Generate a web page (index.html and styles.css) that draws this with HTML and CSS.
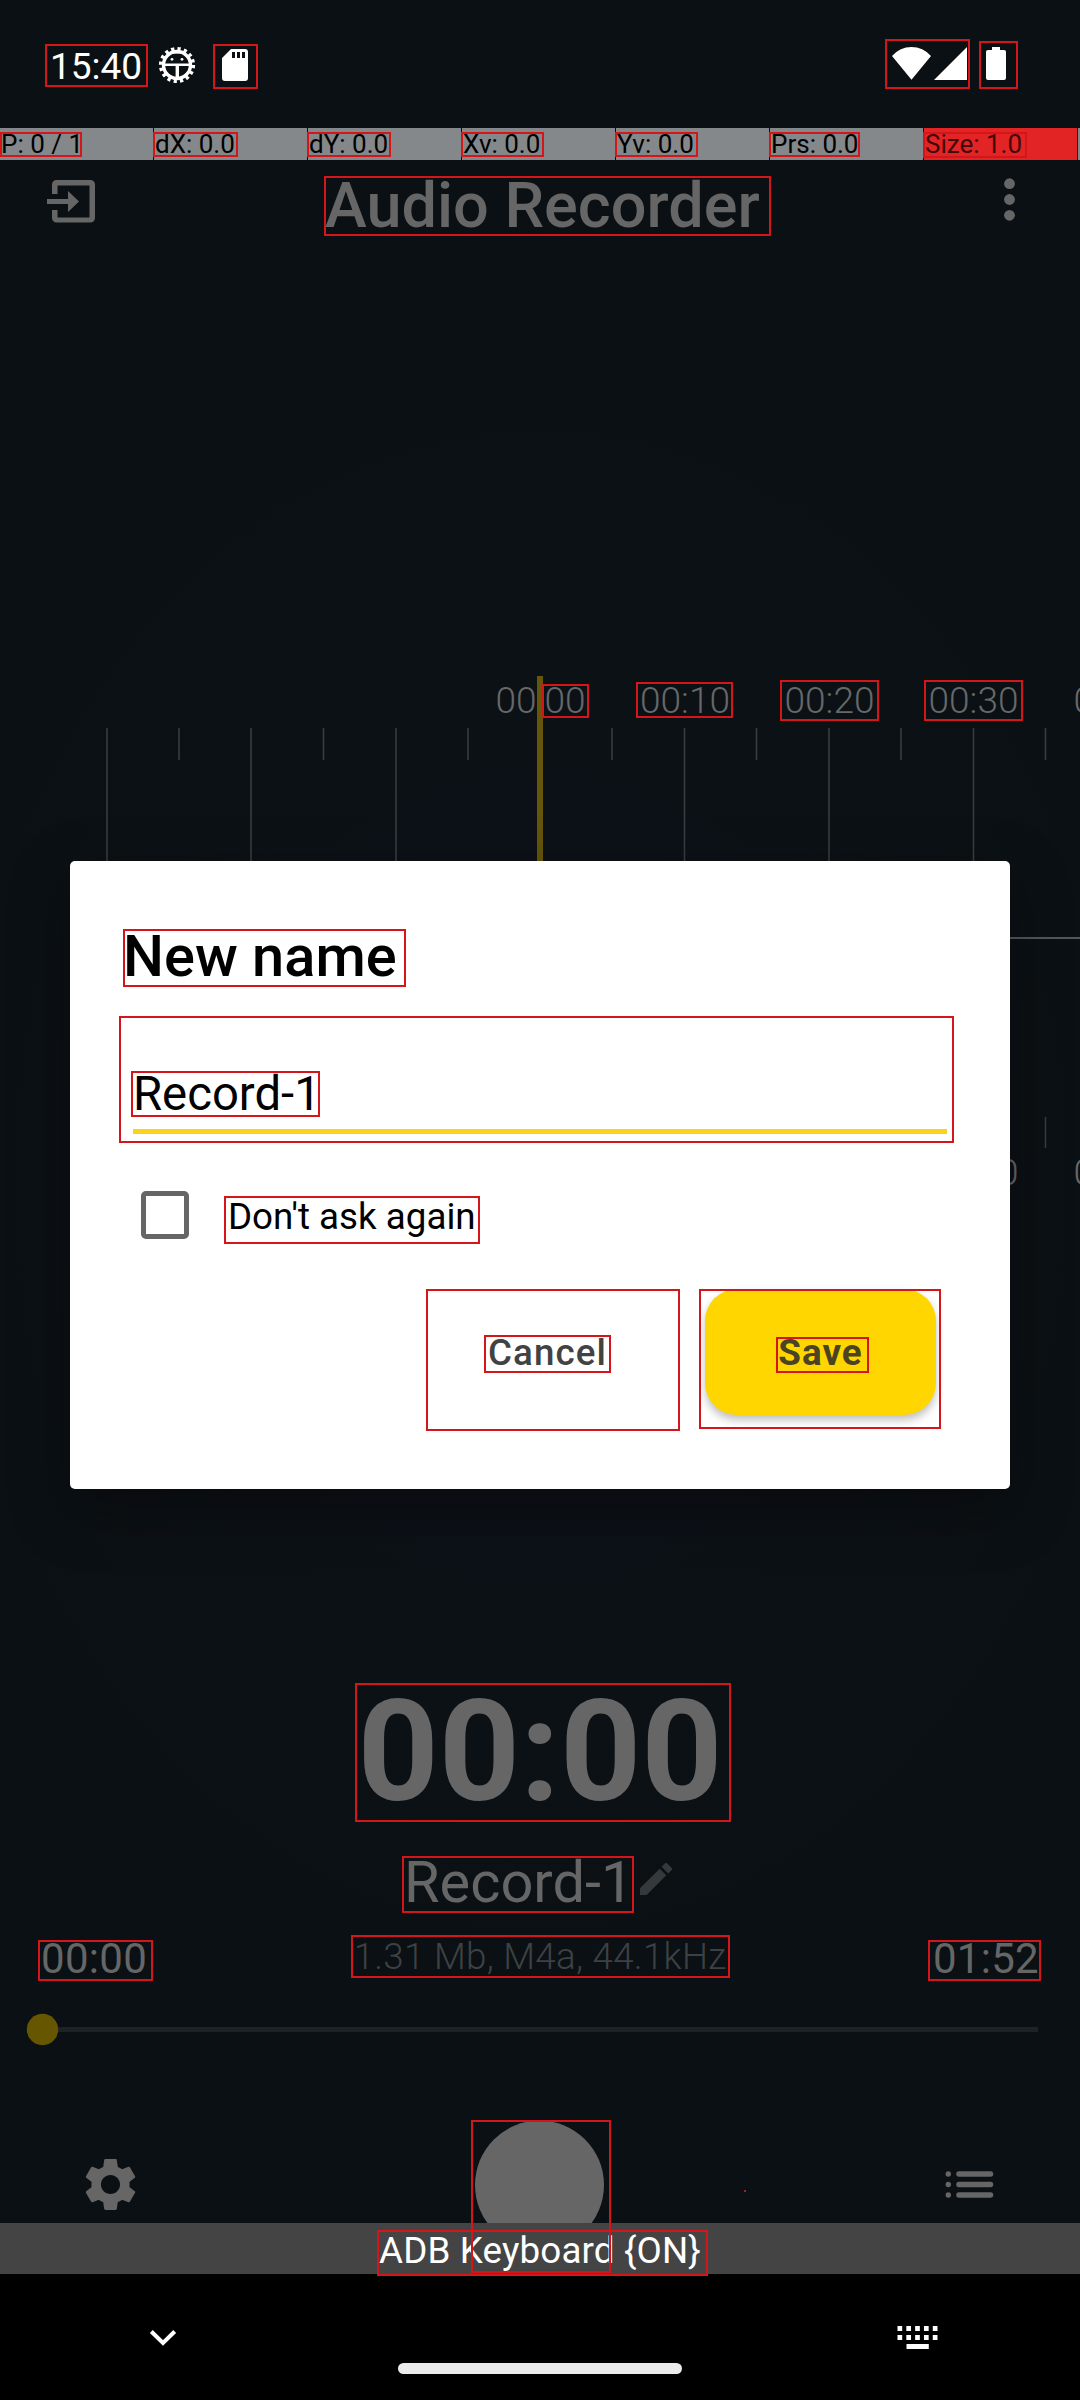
FILE: index.html
```html
<!DOCTYPE html>
<html lang="en">
<head>
<meta charset="utf-8">
<title>Audio Recorder</title>
<link rel="stylesheet" href="styles.css">
</head>
<body>
<div class="phone">
  <header class="status">
    <span class="clock">15:40</span>
    <svg class="status-left" viewBox="155 42 100 48" width="100" height="48">
      <circle cx="177" cy="65" r="13.5" fill="none" stroke="#fff" stroke-width="3.4"/>
      <circle cx="177" cy="65" r="16.2" fill="none" stroke="#fff" stroke-width="3.8" stroke-dasharray="3.2 3.162"/>
      <path d="M163 63.500h28v2.500h-28zM175.600 66h3.400v12h-3.400z" fill="#fff"/>
      <path fill="#fff" fill-rule="evenodd" d="M164 63.500a13 13 0 0 1 26 0zM170.300 59.500a1.700 1.700 0 1 0 3.400 0a1.700 1.700 0 1 0-3.400 0zM180.300 59.500a1.700 1.700 0 1 0 3.400 0a1.700 1.700 0 1 0-3.400 0z" opacity="0"/>
      <path d="M167.500 57l4-3.500h11l4 3.500-3.500-5.500h-12z" fill="#fff"/>
      <circle cx="172" cy="59.300" r="1.400" fill="#fff"/><circle cx="182" cy="59.300" r="1.400" fill="#fff"/>
      <path fill="#fff" fill-rule="evenodd" d="M231 49h14a3 3 0 0 1 3 3v26a3 3 0 0 1-3 3h-20a3 3 0 0 1-3-3V58zM232 52v6h3v-6zm5 0v6h3v-6zm5 0v6h3v-6z"/>
    </svg>
    <svg class="status-right" viewBox="885 42 130 48" width="130" height="48">
      <path fill="#fff" d="M892 56q8-9 19.500-9t19.500 9l-19.500 23.800zM934 80l33-33v33zM988 50h4v-3h8v3h4a2 2 0 0 1 2 2v26a2 2 0 0 1-2 2h-16a2 2 0 0 1-2-2V52a2 2 0 0 1 2-2z"/>
    </svg>
  </header>
  <div class="pointer">
    <span>P: 0 / 1</span><span>dX: 0.0</span><span>dY: 0.0</span><span>Xv: 0.0</span><span>Yv: 0.0</span><span>Prs: 0.0</span><span class="hot">Size: 1.0</span><span class="rest"></span>
  </div>
  <main class="screen">
    <div class="appbar">
      <svg viewBox="45 175 54 54" width="54" height="54" fill="#666">
        <path d="M52 194v-9.500a4.500 4.500 0 0 1 4.500-4.500h34a4.500 4.500 0 0 1 4.500 4.500v33.500a4.500 4.500 0 0 1-4.500 4.500h-34a4.500 4.500 0 0 1-4.500-4.500V210h5.500v7.500h32v-32h-32v8.500z"/>
        <path d="M47 199h21v-8l11 10.500-11 10.500v-8h-21z"/>
      </svg>
      <h1>Audio Recorder</h1>
      <svg class="more" viewBox="999 175 20 54" width="20" height="54" fill="#666"><circle cx="1009.500" cy="183.700" r="5.400"/><circle cx="1009.500" cy="199.500" r="5.400"/><circle cx="1009.500" cy="215.300" r="5.400"/></svg>
    </div>
    <svg class="wave" viewBox="0 250 1080 970" width="1080" height="970">
      <path class="tick" d="M107 728v420M251 728v420M396 728v420M540 728v420M684.500 728v420M829 728v420M973.500 728v420M179 728v32M323.500 728v32M468 728v32M612 728v32M756.500 728v32M901 728v32M1045.500 728v32M1045.500 1117v31"/>
      <path d="M540 938h540" stroke="#53575a" stroke-width="2"/>
      <g class="marks">
        <text x="540.500" y="713">00:00</text><text x="685" y="713">00:10</text><text x="829.500" y="713">00:20</text><text x="973.500" y="713">00:30</text><text x="1118.500" y="713">00:40</text>
        <text x="973.500" y="1184.500">00:30</text><text x="1118.500" y="1184.500">00:40</text>
      </g>
      <path d="M540 676v520" stroke="#66560a" stroke-width="6"/>
    </svg>
    <div class="timer">00:00</div>
    <div class="name">
      <span>Record-1</span>
      <svg viewBox="3 3 18 18" width="32" height="32" fill="#36393c"><path d="M3 17.250V21h3.750L17.810 9.940l-3.750-3.750L3 17.250zM20.710 7.040a1 1 0 0 0 0-1.410l-2.340-2.340a1 1 0 0 0-1.410 0l-1.830 1.830 3.750 3.750 1.830-1.830z"/></svg>
    </div>
    <div class="info"><span class="time">00:00</span><span class="meta">1.31 Mb, M4a, 44.1kHz</span><span class="time">01:52</span></div>
    <svg class="slider" viewBox="0 2005 1080 50" width="1080" height="50"><path d="M42 2029.500h996" stroke="#1e2226" stroke-width="5"/><circle cx="42.500" cy="2029.500" r="15.700" fill="#665600"/></svg>
    <svg class="controls" viewBox="0 2105 1080 118" width="1080" height="118" fill="#666">
      <g transform="translate(78.700 2152.700) scale(2.650)"><path d="M19.140 12.940c.04-.3.06-.61.06-.94 0-.32-.02-.64-.07-.94l2.030-1.580c.18-.14.23-.41.12-.61l-1.920-3.320c-.12-.22-.37-.29-.59-.22l-2.390.96c-.5-.38-1.030-.7-1.620-.94l-.36-2.540c-.04-.24-.24-.41-.48-.41h-3.840c-.24 0-.43.17-.47.41l-.36 2.540c-.59.24-1.130.57-1.620.94l-2.390-.96c-.22-.08-.47 0-.59.22L2.740 8.870c-.12.21-.08.47.12.61l2.030 1.580c-.05.3-.09.63-.09.940s.02.640.07.940l-2.030 1.580c-.18.14-.23.41-.12.61l1.920 3.320c.12.22.37.290.59.220l2.390-.96c.5.380 1.030.7 1.620.940l.36 2.540c.05.240.240.410.480.410h3.840c.240 0 .440-.170.470-.410l.360-2.540c.590-.240 1.130-.560 1.620-.940l2.390.960c.220.080.470 0 .590-.220l1.920-3.320c.120-.220.070-.470-.120-.610l-2.010-1.580zM12 15.600c-1.980 0-3.600-1.620-3.600-3.600s1.620-3.600 3.600-3.600 3.600 1.620 3.600 3.600-1.620 3.600-3.600 3.600z"/></g>
      <circle cx="539.500" cy="2185" r="64.500"/>
      <circle cx="948.300" cy="2174" r="2.700"/><circle cx="948.300" cy="2184.500" r="2.700"/><circle cx="948.300" cy="2195" r="2.700"/>
      <path d="M959 2174h31.500M959 2184.500h31.500M959 2195h31.500" stroke="#666" stroke-width="5.600" stroke-linecap="round"/>
    </svg>
  </main>
  <div class="adb">ADB Keyboard {ON}</div>
  <svg class="nav" viewBox="0 2274 1080 126" width="1080" height="126">
    <path d="M151.300 2331.500L163 2343l11.700-11.500" fill="none" stroke="#fff" stroke-width="4"/>
    <rect x="398" y="2363" width="284" height="11" rx="5.500" fill="#ebebeb"/>
    <path d="M897.500 2328.500h41M897.500 2337.500h41" stroke="#fff" stroke-width="5" stroke-dasharray="4.700 4.120"/>
    <path d="M906.500 2346.500h22.300" stroke="#fff" stroke-width="5"/>
  </svg>

  <section class="dialog">
    <h2>New name</h2>
    <div class="field">Record-1</div>
    <div class="check"><i></i><span>Don't ask again</span></div>
    <div class="actions"><button class="cancel">Cancel</button><button class="save">Save</button></div>
  </section>

  <svg class="bounds" viewBox="0 0 1080 2400" width="1080" height="2400">
    <rect x="46" y="45" width="101" height="41"/><rect x="214" y="45" width="43" height="43"/>
    <rect x="886" y="40" width="83" height="48"/><rect x="980" y="42" width="37" height="46"/>
    <rect x="1" y="133" width="80" height="23"/><rect x="154" y="133" width="83" height="23"/><rect x="308" y="133" width="82" height="23"/><rect x="462" y="133" width="81" height="23"/><rect x="616" y="133" width="81" height="23"/><rect x="770" y="133" width="89" height="23"/><rect x="924" y="133" width="102" height="24"/>
    <rect x="325" y="177" width="445" height="58"/>
    <rect x="543" y="685" width="45" height="32"/><rect x="637" y="683" width="95" height="34"/><rect x="781" y="681" width="97" height="39"/><rect x="925" y="681" width="97" height="39"/>
    <rect x="124" y="930" width="281" height="56"/><rect x="120" y="1017" width="833" height="125"/><rect x="132" y="1072" width="187" height="44"/><rect x="225" y="1197" width="254" height="46"/>
    <rect x="427" y="1290" width="252" height="140"/><rect x="485" y="1336" width="125" height="36"/><rect x="700" y="1290" width="240" height="138"/><rect x="777" y="1338" width="91" height="34"/>
    <rect x="356" y="1684" width="374" height="137"/><rect x="403" y="1857" width="230" height="55"/><rect x="352" y="1936" width="377" height="41"/><rect x="39" y="1941" width="113" height="39"/><rect x="929" y="1941" width="111" height="39"/>
    <rect x="472" y="2121" width="138" height="151"/><rect x="378" y="2231" width="329" height="44"/><rect class="dot" x="744" y="2190" width="2" height="2"/>
  </svg>
</div>
</body>
</html>
```
FILE: styles.css
```css
* { box-sizing: border-box; }
body { margin: 0; background: #0a1013; font-family: Roboto, "Liberation Sans", sans-serif; }
h1, h2 { margin: 0; font-weight: 500; }
svg { display: block; flex: none; }

.phone {
  position: relative;
  display: flex;
  flex-direction: column;
  width: 1080px;
  height: 2400px;
  overflow: hidden;
  background: radial-gradient(ellipse 620px 800px at 540px 1180px, #0d121a 0%, #0c1116 65%, #0a1013 100%);
}

.status { display: flex; height: 128px; padding: 42px 65px 0 50px; color: #fff; }
.clock { width: 105px; font-size: 37px; line-height: 49px; }
.status-right { margin-left: auto; }

.pointer { display: flex; gap: 1px; height: 32px; }
.pointer span { width: 153px; padding-left: 1px; background: #85888a; color: #000; font-size: 26px; line-height: 33px; white-space: nowrap; }
.pointer .hot { background: #e32424; color: #400808; }
.pointer .rest { flex: 1; width: auto; padding: 0; }

.screen { display: flex; flex-direction: column; height: 2063px; color: #666; }
.appbar { display: flex; height: 90px; padding: 15px 61px 0 45px; }
.appbar h1 { margin: -9px 0 0 226px; font-size: 63px; line-height: 80px; }
.appbar .more { margin-left: auto; }

.tick { stroke: #383c3f; stroke-width: 1.6; fill: none; }
.marks { fill: #66686a; font-size: 37px; font-weight: 300; text-anchor: middle; }

.timer { margin-top: 462px; font-size: 141.75px; font-weight: 700; line-height: 140px; text-align: center; }
.name { display: flex; gap: 7px; height: 70px; margin-top: 25px; padding-left: 404px; font-size: 57.75px; line-height: 70px; }
.name svg { margin-top: 16px; }
.info { display: flex; justify-content: space-between; height: 56px; margin-top: 14px; padding: 0 41px 0 41px; line-height: 50px; white-space: nowrap; }
.time { padding-top: 3px; font-size: 42px; letter-spacing: .3px; }
.meta { padding-top: 1px; font-size: 36.75px; font-weight: 300; letter-spacing: .28px; color: #3e4144; }
.slider { margin-top: 18px; }
.controls { margin-top: 50px; }

.adb { height: 51px; background: #444; color: #fff; font-size: 36.75px; letter-spacing: .15px; line-height: 55px; text-align: center; }
.nav { background: #000; }

.dialog {
  position: absolute;
  left: 70px;
  top: 861px;
  width: 940px;
  height: 628px;
  padding: 59px 63px 0 53px;
  border-radius: 5px;
  background: #fff;
  color: #000;
  box-shadow: 0 20px 60px rgba(0, 0, 0, .35);
}
.dialog h2 { font-size: 57.75px; line-height: 72px; }
.field { height: 142px; margin-left: 10px; padding-top: 74px; border-bottom: 5px solid #f9d41b; font-size: 47.25px; line-height: 56px; }
.check { display: flex; align-items: center; gap: 39px; height: 64px; margin: 49px 0 0 18px; font-size: 36.75px; }
.check i { width: 48px; height: 48px; border: 5px solid #666; border-radius: 5px; }
.check span { padding-top: 2px; }
.actions { display: flex; justify-content: flex-end; margin: 42px 11px 0 0; }
.actions button { height: 126px; border: 0; padding: 2px 0 0; font: 500 36.75px/124px Roboto, sans-serif; letter-spacing: 1.1px; color: #424242; background: none; }
.actions .cancel { width: 254px; margin-right: 25px; padding-right: 11px; }
.actions .save { width: 231px; border-radius: 32px; background: #ffd600; color: #4a4420; font-weight: 700; box-shadow: 0 5px 8px rgba(0, 0, 0, .25); }

.bounds { position: absolute; left: 0; top: 0; fill: none; stroke: #d41519; stroke-width: 2; pointer-events: none; }
.bounds .dot { fill: #a32024; stroke: none; }
```
